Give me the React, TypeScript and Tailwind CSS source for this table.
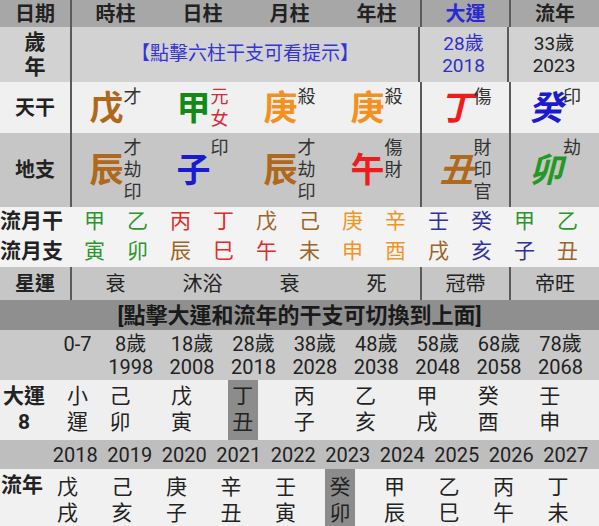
import React from "react";

type Pillar = {
  ch: string;
  color: string;
  tips: string[];
  tipColor?: string;
  italic?: boolean;
};

const stems: Pillar[] = [
  { ch: "戊", color: "text-[#b0681a]", tips: ["才"] },
  { ch: "甲", color: "text-[#138a13]", tips: ["元", "女"], tipColor: "text-[#d42a3a]" },
  { ch: "庚", color: "text-[#f5901e]", tips: ["殺"] },
  { ch: "庚", color: "text-[#f5901e]", tips: ["殺"] },
  { ch: "丁", color: "text-[#ee1c1c]", tips: ["傷"], italic: true },
  { ch: "癸", color: "text-[#1a1ad0]", tips: ["印"], italic: true },
];

const branches: Pillar[] = [
  { ch: "辰", color: "text-[#b0681a]", tips: ["才", "劫", "印"] },
  { ch: "子", color: "text-[#1a1ad0]", tips: ["印"] },
  { ch: "辰", color: "text-[#b0681a]", tips: ["才", "劫", "印"] },
  { ch: "午", color: "text-[#ee1c1c]", tips: ["傷", "財"] },
  { ch: "丑", color: "text-[#b0681a]", tips: ["財", "印", "官"], italic: true },
  { ch: "卯", color: "text-[#229922]", tips: ["劫"], italic: true },
];

const wood = "text-[#2b962b]";
const fire = "text-[#dd2b2b]";
const earth = "text-[#9c6526]";
const metal = "text-[#ef9526]";
const water = "text-[#30309e]";

const monthStems: [string, string][] = [
  ["甲", wood], ["乙", wood], ["丙", fire], ["丁", fire], ["戊", earth], ["己", earth],
  ["庚", metal], ["辛", metal], ["壬", water], ["癸", water], ["甲", wood], ["乙", wood],
];
const monthBranches: [string, string][] = [
  ["寅", wood], ["卯", wood], ["辰", earth], ["巳", fire], ["午", fire], ["未", earth],
  ["申", metal], ["酉", metal], ["戌", earth], ["亥", water], ["子", water], ["丑", earth],
];

const ages = [
  ["8歲", "1998"], ["18歲", "2008"], ["28歲", "2018"], ["38歲", "2028"],
  ["48歲", "2038"], ["58歲", "2048"], ["68歲", "2058"], ["78歲", "2068"],
];
const dayun = ["己卯", "戊寅", "丁丑", "丙子", "乙亥", "甲戌", "癸酉", "壬申"];
const years = ["2018", "2019", "2020", "2021", "2022", "2023", "2024", "2025", "2026", "2027"];
const liunian = ["戊戌", "己亥", "庚子", "辛丑", "壬寅", "癸卯", "甲辰", "乙巳", "丙午", "丁未"];

const lbl = "w-[72px] shrink-0 border-r-2 border-[#5a5a5a] flex items-center justify-center font-bold text-[20px]";
const col = "w-[87px] shrink-0 flex items-center justify-center";
const colEnd = "w-[89px] shrink-0 border-r-2 border-[#5a5a5a] flex items-center justify-center";
const colLast = "flex-1 flex items-center justify-center";

function Gan({ p, lines }: { p: Pillar; lines: number }) {
  return (
    <div className="flex items-center">
      <span className={`text-[34px] font-bold leading-none ${p.color} ${p.italic ? "italic" : ""}`}>{p.ch}</span>
      <div
        className={`flex flex-col text-[18px] leading-[22px] ${lines === 3 ? "h-[66px]" : "h-[44px]"} ${
          p.tipColor ?? "text-[#333]"
        }`}
      >
        {p.tips.map((t, i) => (
          <span key={i}>{t}</span>
        ))}
      </div>
    </div>
  );
}

function PillarRow({ label, list, lines, className }: { label: string; list: Pillar[]; lines: number; className: string }) {
  return (
    <div className={`flex ${className}`}>
      <div className={lbl}>{label}</div>
      <div className={col}><Gan p={list[0]} lines={lines} /></div>
      <div className={col}><Gan p={list[1]} lines={lines} /></div>
      <div className={col}><Gan p={list[2]} lines={lines} /></div>
      <div className={colEnd}><Gan p={list[3]} lines={lines} /></div>
      <div className={colEnd}><Gan p={list[4]} lines={lines} /></div>
      <div className={colLast}><Gan p={list[5]} lines={lines} /></div>
    </div>
  );
}

function MonthRow({ label, list }: { label: string; list: [string, string][] }) {
  return (
    <div className="flex h-[30px] items-center bg-[#f3f3f3]">
      <div className="w-[73px] shrink-0 font-bold text-[21px]">{label}</div>
      {list.map(([c, color], i) => (
        <div key={i} className={`w-[43px] shrink-0 text-center text-[21px] ${color}`}>
          {c}
        </div>
      ))}
    </div>
  );
}

export default function App() {
  return (
    <div className="w-[599px] h-[526px] overflow-hidden bg-[#f0f0f0] text-[#222] font-[Roboto,'Noto_Sans_CJK_TC',sans-serif]">
      {/* header */}
      <div className="flex h-[27px] bg-[#a7a7a7] text-[20px] font-bold">
        <div className={lbl}>日期</div>
        <div className={col}>時柱</div>
        <div className={col}>日柱</div>
        <div className={col}>月柱</div>
        <div className={colEnd}>年柱</div>
        <div className={`${colEnd} text-[#2a2ad0]`}>大運</div>
        <div className={colLast}>流年</div>
      </div>

      {/* age / year */}
      <div className="flex h-[55px] bg-[#d2d2d2]">
        <div className={`${lbl} flex-col leading-[25px] text-[21px]`}>
          <span>歲</span>
          <span>年</span>
        </div>
        <div className="w-[348px] shrink-0 border-r-2 border-[#5a5a5a] flex items-center justify-center text-[19px] text-[#3535d5]">
          【點擊六柱干支可看提示】
        </div>
        <div className={`${colEnd} flex-col text-[19px] leading-[22px] text-[#3030c8]`}>
          <span>28歲</span>
          <span>2018</span>
        </div>
        <div className={`${colLast} flex-col text-[19px] leading-[22px]`}>
          <span>33歲</span>
          <span>2023</span>
        </div>
      </div>

      <PillarRow label="天干" list={stems} lines={2} className="h-[51px] bg-[#f0f0f0]" />
      <PillarRow label="地支" list={branches} lines={3} className="h-[74px] bg-[#c6c6c6]" />

      <MonthRow label="流月干" list={monthStems} />
      <MonthRow label="流月支" list={monthBranches} />

      {/* star luck */}
      <div className="flex h-[33px] bg-[#c6c6c6] text-[20px]">
        <div className={lbl}>星運</div>
        <div className={col}>衰</div>
        <div className={col}>沐浴</div>
        <div className={col}>衰</div>
        <div className={colEnd}>死</div>
        <div className={colEnd}>冠帶</div>
        <div className={colLast}>帝旺</div>
      </div>

      {/* banner */}
      <div className="flex h-[30px] items-center justify-center bg-[#8f8f8f] text-[22px] font-bold text-[#1a1a1a]">
        [點擊大運和流年的干支可切換到上面]
      </div>

      {/* dayun ages */}
      <div className="flex h-[50px] bg-[#c9c9c9] pt-[3px] text-[20px] leading-[23px]">
        <div className="w-[55px] shrink-0" />
        <div className="w-[45px] shrink-0 text-center">0-7</div>
        {ages.map(([a, y]) => (
          <div key={y} className="w-[61.4px] shrink-0 flex flex-col items-center">
            <span>{a}</span>
            <span>{y}</span>
          </div>
        ))}
      </div>

      {/* dayun pillars */}
      <div className="flex h-[60px] bg-[#efefef] text-[21px] leading-[26px]">
        <div className="w-[55px] shrink-0">
          <div className="w-12 pt-[3px] flex flex-col items-center font-bold">
            <span>大運</span>
            <span>8</span>
          </div>
        </div>
        <div className="w-[45px] shrink-0 pt-[3px] flex flex-col items-center">
          <span>小</span>
          <span>運</span>
        </div>
        {dayun.map((d, i) => (
          <div key={d} className="w-[61.4px] shrink-0">
            <div
              className={`ml-[5px] w-[30px] h-full pt-[3px] flex flex-col items-center ${
                i === 2 ? "bg-[#8c8c8c]" : ""
              }`}
            >
              <span>{d[0]}</span>
              <span>{d[1]}</span>
            </div>
          </div>
        ))}
      </div>

      {/* liunian years */}
      <div className="flex h-[29px] items-center bg-[#bebebe] text-[20px]">
        <div className="w-[48px] shrink-0" />
        {years.map((y) => (
          <div key={y} className="w-[54.5px] shrink-0 text-center">
            {y}
          </div>
        ))}
      </div>

      {/* liunian pillars */}
      <div className="flex h-[57px] bg-[#f1f1f1] text-[21px] leading-[26px]">
        <div className="w-[44px] shrink-0 pt-[3px] text-center font-bold">流年</div>
        <div className="w-[4px] shrink-0" />
        {liunian.map((d, i) => (
          <div key={d} className="w-[54.5px] shrink-0">
            <div
              className={`ml-[4.5px] w-[30px] h-full pt-[5px] flex flex-col items-center ${
                i === 5 ? "bg-[#8c8c8c]" : ""
              }`}
            >
              <span>{d[0]}</span>
              <span>{d[1]}</span>
            </div>
          </div>
        ))}
      </div>
    </div>
  );
}
